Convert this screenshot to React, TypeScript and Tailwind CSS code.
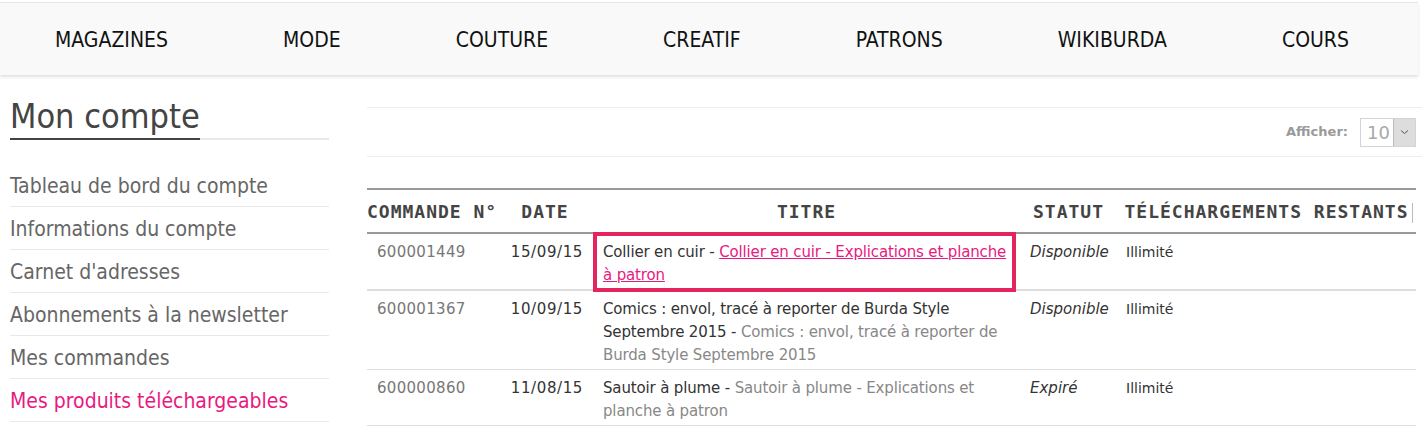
import React from 'react';

const navItems = ['MAGAZINES', 'MODE', 'COUTURE', 'CREATIF', 'PATRONS', 'WIKIBURDA', 'COURS'];

const menu = [
  'Tableau de bord du compte',
  'Informations du compte',
  "Carnet d'adresses",
  'Abonnements à la newsletter',
  'Mes commandes',
  'Mes produits téléchargeables',
];

const tahoma = "font-['DejaVu_Sans_Condensed','DejaVu_Sans',sans-serif] [font-stretch:condensed]";

const App = () => {
  return (
    <div className="w-[1422px] h-[428px] overflow-hidden bg-white font-['DejaVu_Sans',Verdana,sans-serif]">
      <nav
        className={`mt-[2px] w-[1418px] h-[73px] bg-[#f9f9f9] border-t border-[#e6e6e6] shadow-[0_2px_3px_rgba(0,0,0,0.12)] flex items-center justify-between pt-[4px] pl-[55px] pr-[69px] text-[21px] text-[#111] ${tahoma}`}
      >
        {navItems.map((item) => (
          <span key={item}>{item}</span>
        ))}
      </nav>

      <div className="flex">
        {/* sidebar */}
        <aside className={`ml-[10px] w-[319px] pt-[24px] ${tahoma}`}>
          <div className="flex border-b-2 border-[#e8e8e8]">
            <h1 className="text-[34px] leading-[34px] text-[#444] pb-[5px] border-b-2 border-[#444] -mb-[2px]">
              Mon compte
            </h1>
          </div>
          <ul className="mt-[24px]">
            {menu.map((m, i) => (
              <li
                key={m}
                className={`h-[43px] pt-[3px] border-b border-[#e8e8e8] flex items-center text-[21px] ${
                  i === menu.length - 1 ? 'text-[#e8197f]' : 'text-[#666]'
                }`}
              >
                {m}
              </li>
            ))}
          </ul>
        </aside>

        {/* main */}
        <main className="ml-[38px] flex-1 pt-[32px]">
          <div className="border-t border-b border-[#eeeeee] h-[50px] flex items-center justify-end pr-[6px]">
            <span className="text-[13px] font-bold text-[#9a9a9a] mr-[12px]">Afficher:</span>
            <div className="w-[56px] h-[29px] border border-[#d4d4d4] flex">
              <span className="flex-1 text-[18px] leading-[27px] text-[#a8a8a8] pl-[6px]">10</span>
              <span className="w-[22px] bg-[#dddddd] border-l border-[#bbbbbb] flex items-center justify-center">
                <svg width="9" height="6" viewBox="0 0 9 6">
                  <path d="M1 1.5 L4.5 4.5 L8 1.5" fill="none" stroke="#555" strokeWidth="1" />
                </svg>
              </span>
            </div>
          </div>

          <table className="mt-[31px] w-[1049px] table-fixed border-collapse">
            <colgroup>
              <col className="w-[130px]" />
              <col className="w-[96px]" />
              <col className="w-[427px]" />
              <col className="w-[97px]" />
              <col className="w-[299px]" />
            </colgroup>
            <thead>
              <tr className="border-t-2 border-b-2 border-[#999999] font-['DejaVu_Sans_Mono',monospace] font-bold text-[18px] tracking-[1px] text-[#444]">
                <th className="h-[44px] p-0 text-left whitespace-nowrap font-bold">COMMANDE N°</th>
                <th className="p-0 text-center whitespace-nowrap font-bold">DATE</th>
                <th className="p-0 text-center whitespace-nowrap font-bold">TITRE</th>
                <th className="p-0 text-center whitespace-nowrap font-bold">STATUT</th>
                <th className="p-0 text-center whitespace-nowrap font-bold relative">
                  TÉLÉCHARGEMENTS RESTANTS
                  <span className="absolute right-[3px] top-[13px] h-[20px] border-r border-[#bbbbbb]" />
                </th>
              </tr>
            </thead>
            <tbody className="text-[15px] leading-[23px] text-[#333]">
              <tr className="border-b-2 border-[#dddddd] align-top">
                <td className="pt-[7px] pb-[2px] pl-[10px] text-[#777] tracking-[0.3px]">600001449</td>
                <td className="pt-[7px] pb-[2px] pr-[10px] text-right tracking-[0.6px]">15/09/15</td>
                <td className="pt-[7px] pb-[2px] pl-[10px] pr-[3px] tracking-[-0.15px] relative">
                  Collier en cuir -{' '}
                  <a href="#" className="text-[#e8197f] underline">
                    Collier en cuir - Explications et planche à patron
                  </a>
                  <span className="absolute -top-[2px] left-0 right-[4px] -bottom-[3px] border-4 border-[#e3245f]" />
                </td>
                <td className="pt-[7px] pb-[2px] pl-[10px] italic">Disponible</td>
                <td className="pt-[7px] pb-[2px] pl-[9px] text-[14px]">Illimité</td>
              </tr>
              <tr className="border-b border-[#dddddd] align-top">
                <td className="pt-[7px] pb-[2px] pl-[10px] text-[#777] tracking-[0.3px]">600001367</td>
                <td className="pt-[7px] pb-[2px] pr-[10px] text-right tracking-[0.6px]">10/09/15</td>
                <td className="pt-[7px] pb-[2px] pl-[10px] pr-[3px] tracking-[-0.15px]">
                  Comics : envol, tracé à reporter de Burda Style Septembre 2015 -{' '}
                  <span className="text-[#888]">Comics : envol, tracé à reporter de Burda Style Septembre 2015</span>
                </td>
                <td className="pt-[7px] pb-[2px] pl-[10px] italic">Disponible</td>
                <td className="pt-[7px] pb-[2px] pl-[9px] text-[14px]">Illimité</td>
              </tr>
              <tr className="border-b border-[#dddddd] align-top">
                <td className="pt-[7px] pb-[2px] pl-[10px] text-[#777] tracking-[0.3px]">600000860</td>
                <td className="pt-[7px] pb-[2px] pr-[10px] text-right tracking-[0.6px]">11/08/15</td>
                <td className="pt-[7px] pb-[2px] pl-[10px] pr-[3px] tracking-[-0.15px]">
                  Sautoir à plume -{' '}
                  <span className="text-[#888]">Sautoir à plume - Explications et planche à patron</span>
                </td>
                <td className="pt-[7px] pb-[2px] pl-[10px] italic">Expiré</td>
                <td className="pt-[7px] pb-[2px] pl-[9px] text-[14px]">Illimité</td>
              </tr>
            </tbody>
          </table>
        </main>
      </div>
    </div>
  );
};

export default App;
